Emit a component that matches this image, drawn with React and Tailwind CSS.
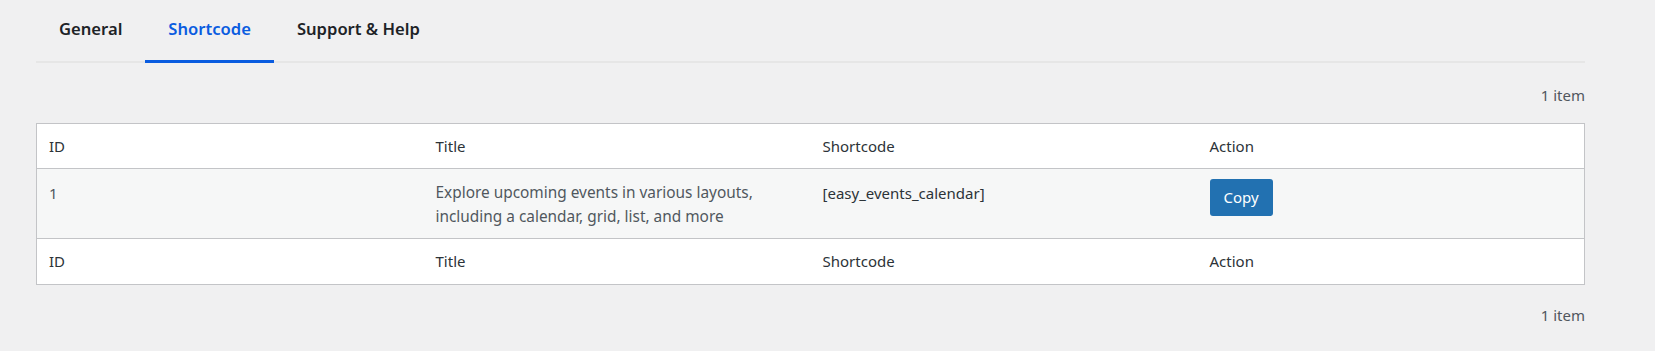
import React from "react";

const font = { fontFamily: '"Noto Sans", "Open Sans", sans-serif' };

export default function App() {
  const cols = ["ID", "Title", "Shortcode", "Action"];
  return (
    <div className="min-h-[351px] w-full bg-[#f0f0f1]" style={font}>
      <div className="ml-[36px] w-[1549px]">
        <div className="flex h-[63px] border-b-2 border-[#e6e6e6]">
          <div className="-mb-[2px] h-[63px] px-[23px] pt-[19px] text-[16.6px] font-semibold leading-[20px] text-[#1d2327]">
            General
          </div>
          <div className="-mb-[2px] h-[63px] border-b-[3px] border-[#0a5ce0] px-[23px] pt-[19px] text-[16.6px] font-semibold leading-[20px] text-[#0a5ce0]">
            Shortcode
          </div>
          <div className="-mb-[2px] h-[63px] px-[23px] pt-[19px] text-[16.6px] font-semibold leading-[20px] text-[#1d2327]">
            Support &amp; Help
          </div>
        </div>

        <div className="mt-[22px] text-right text-[15px] leading-[20px] text-[#50575e]">1 item</div>

        <table className="mt-[18px] w-full table-fixed border-collapse border border-[#c3c4c7] text-[15px]">
          <thead>
            <tr className="h-[45px] bg-white">
              {cols.map((c) => (
                <th key={c} className="border-b border-[#c3c4c7] px-[12px] text-left font-normal text-[#2c3338]">
                  {c}
                </th>
              ))}
            </tr>
          </thead>
          <tbody>
            <tr className="h-[70px] bg-[#f6f7f7] align-top">
              <td className="px-[12px] pt-[12px] leading-[24px] text-[#50575e]">1</td>
              <td className="px-[12px] pt-[12px] text-[15.4px] leading-[24px] text-[#50575e]">
                Explore upcoming events in various layouts,
                <br />
                including a calendar, grid, list, and more
              </td>
              <td className="px-[12px] pt-[12px] leading-[24px] text-[#2c3338]">[easy_events_calendar]</td>
              <td className="px-[12px] pt-[10px]">
                <button className="h-[37px] w-[63px] rounded-[3px] bg-[#2271b1] text-[15px] text-white">Copy</button>
              </td>
            </tr>
          </tbody>
          <tfoot>
            <tr className="h-[46px] bg-white">
              {cols.map((c) => (
                <th key={c} className="border-t border-[#c3c4c7] px-[12px] text-left font-normal text-[#2c3338]">
                  {c}
                </th>
              ))}
            </tr>
          </tfoot>
        </table>

        <div className="mt-[20px] text-right text-[15px] leading-[20px] text-[#50575e]">1 item</div>
      </div>
    </div>
  );
}
